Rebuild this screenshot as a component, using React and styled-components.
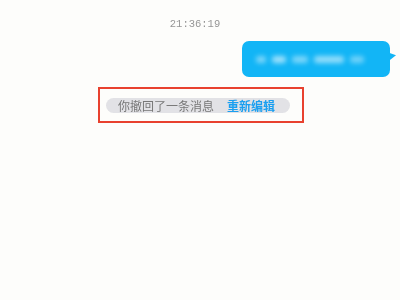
import React from "react";
import styled, { createGlobalStyle } from "styled-components";

const Global = createGlobalStyle`
  html, body {
    margin: 0;
    padding: 0;
    background: #fdfdfb;
  }
  * {
    box-sizing: border-box;
  }
`;

const Page = styled.div`
  width: 400px;
  height: 300px;
  background: #fdfdfb;
  display: flex;
  flex-direction: column;
  font-family: "Noto Sans CJK SC", "Liberation Sans", sans-serif;
  overflow: hidden;
`;

const Time = styled.div`
  margin-top: 18px;
  height: 13px;
  line-height: 13px;
  text-align: center;
  padding-right: 10px;
  font-family: "Liberation Mono", "DejaVu Sans Mono", monospace;
  font-size: 10.5px;
  color: #959595;
  filter: blur(0.3px);
`;

const SentRow = styled.div`
  display: flex;
  justify-content: flex-end;
  padding-right: 10px;
  margin-top: 10px;
`;

const Bubble = styled.div`
  position: relative;
  width: 148px;
  height: 36px;
  border-radius: 7px;
  background: #12b5f6;
  display: flex;
  align-items: center;
  padding: 0 14px;
  gap: 6px;
  &::after {
    content: "";
    position: absolute;
    right: -6px;
    top: 10px;
    width: 0;
    height: 0;
    border-left: 7px solid #12b5f6;
    border-top: 6px solid transparent;
    border-bottom: 2px solid transparent;
    transform: skewY(-25deg);
  }
`;

const Blur = styled.span`
  height: 7px;
  width: ${(p) => p.$w}px;
  border-radius: 3px;
  background: rgba(255, 255, 255, ${(p) => p.$a});
  filter: blur(2.5px);
`;

const NoticeRow = styled.div`
  display: flex;
  justify-content: center;
  margin-top: 10px;
  padding-left: 2px;
`;

const Highlight = styled.div`
  width: 206px;
  height: 36px;
  border: 2px solid #e8412f;
  display: flex;
  align-items: center;
  padding-left: 6px;
`;

const Pill = styled.div`
  height: 15px;
  width: 184px;
  border-radius: 8px;
  background: #e2e2e6;
  display: flex;
  align-items: center;
  padding-left: 12px;
  gap: 13px;
  font-size: 12px;
  line-height: 15px;
  filter: blur(0.3px);
`;

const Note = styled.span`
  color: ${(p) => (p.$link ? "#1a9ff0" : "#777777")};
  font-weight: ${(p) => (p.$link ? 700 : 400)};
  white-space: nowrap;
`;

export default function App() {
  return (
    <>
      <Global />
      <Page>
        <Time>21:36:19</Time>
        <SentRow>
          <Bubble>
            <Blur $w={10} $a={0.45} />
            <Blur $w={14} $a={0.6} />
            <Blur $w={16} $a={0.45} />
            <Blur $w={30} $a={0.55} />
            <Blur $w={14} $a={0.4} />
          </Bubble>
        </SentRow>
        <NoticeRow>
          <Highlight>
            <Pill>
              <Note>你撤回了一条消息</Note>
              <Note $link>重新编辑</Note>
            </Pill>
          </Highlight>
        </NoticeRow>
      </Page>
    </>
  );
}
